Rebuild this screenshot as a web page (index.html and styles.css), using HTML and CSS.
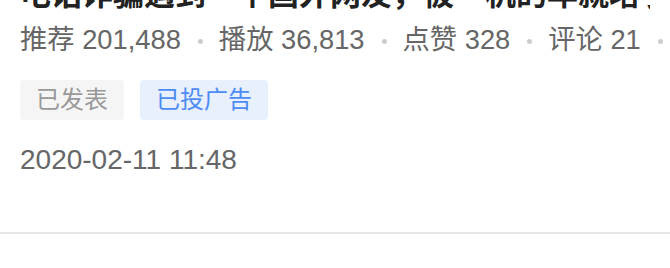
FILE: index.html
```html
<!DOCTYPE html>
<html lang="zh-CN">

<head>
    <meta charset="UTF-8">
    <meta name="viewport" content="width=device-width, initial-scale=1.0">
    <title>作品详情</title>
    <link rel="stylesheet" href="styles.css">
</head>

<body>
    <div class="item">
        <div class="title">电话诈骗遇到一个国外网友，被一机的年就培了，另一个骗子</div>
        <div class="stats"><span>推荐 201,488</span><i class="dot"></i><span>播放 36,813</span><i class="dot"></i><span>点赞 328</span><i class="dot"></i><span>评论 21</span><i class="dot"></i></div>
        <div class="tags">
            <span class="tag">已发表</span>
            <span class="tag tag-blue">已投广告</span>
        </div>
        <div class="date">2020-02-11 11:48</div>
    </div>
</body>

</html>
```

FILE: styles.css
```css
body {
    font-family: "Liberation Sans", "Noto Sans CJK SC", sans-serif;
    background-color: #fff;
    margin: 0;
    padding: 0;
    overflow: hidden;
}

.item {
    padding: 0 20px 52px;
    border-bottom: 2px solid #e6e6e6;
}

.title {
    margin-top: -25px;
    margin-bottom: 5px;
    font-size: 31px;
    font-weight: bold;
    line-height: 40px;
    color: #222;
    white-space: nowrap;
    overflow: hidden;
}

.stats {
    font-size: 27.3px;
    line-height: 40px;
    color: #666;
    white-space: nowrap;
}

.dot {
    display: inline-block;
    width: 5px;
    height: 5px;
    border-radius: 50%;
    background-color: #ccc;
    vertical-align: middle;
    margin: 0 16px 0 17px;
}

.tags {
    margin-top: 20px;
    display: flex;
    gap: 16px;
}

.tag {
    font-size: 24px;
    line-height: 40px;
    padding: 0 16px;
    border-radius: 4px;
    background-color: #f5f5f5;
    color: #999;
}

.tag-blue {
    background-color: #e8f0fe;
    color: #4d8cf5;
}

.date {
    margin-top: 20px;
    font-size: 28px;
    line-height: 40px;
    color: #666;
}
```
